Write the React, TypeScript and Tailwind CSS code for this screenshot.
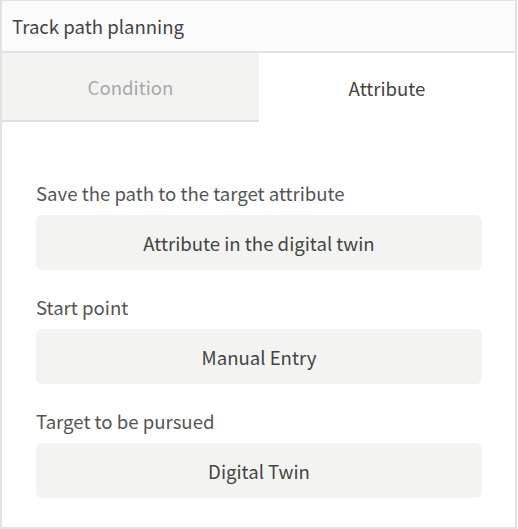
const font = { fontFamily: '"Noto Sans CJK SC", "Noto Sans", sans-serif' }

function Field({ label, value }: { label: string; value: string }) {
  return (
    <div className="flex flex-col">
      <div className="text-[18.6px] leading-[27px] text-[#555]">{label}</div>
      <div className="mt-[9px] h-[55px] rounded-md bg-[#f3f4f2] flex items-center justify-center text-[18.6px] text-[#444]">
        {value}
      </div>
    </div>
  )
}

export default function App() {
  return (
    <div style={font} className="w-[517px] h-[529px] border-x-2 border-t border-b-2 border-[#e2e2e2] bg-white flex flex-col">
      <div className="h-[52px] shrink-0 bg-[#fbfbfb] border-b-2 border-[#e2e2e2] flex items-center px-[10px] text-[18.6px] text-[#444]">
        Track path planning
      </div>
      <div className="h-[69px] shrink-0 flex">
        <div className="w-[257px] bg-[#f3f4f2] border-b-2 border-[#dedede] flex items-center justify-center text-[18.6px] text-[#a8a8a8]">
          Condition
        </div>
        <div className="flex-1 bg-white flex items-center justify-center text-[18.6px] text-[#444]">
          Attribute
        </div>
      </div>
      <div className="flex flex-col gap-[23px] pl-[34px] pr-[33px] pt-[57px]">
        <Field label="Save the path to the target attribute" value="Attribute in the digital twin" />
        <Field label="Start point" value="Manual Entry" />
        <Field label="Target to be pursued" value="Digital Twin" />
      </div>
    </div>
  )
}
